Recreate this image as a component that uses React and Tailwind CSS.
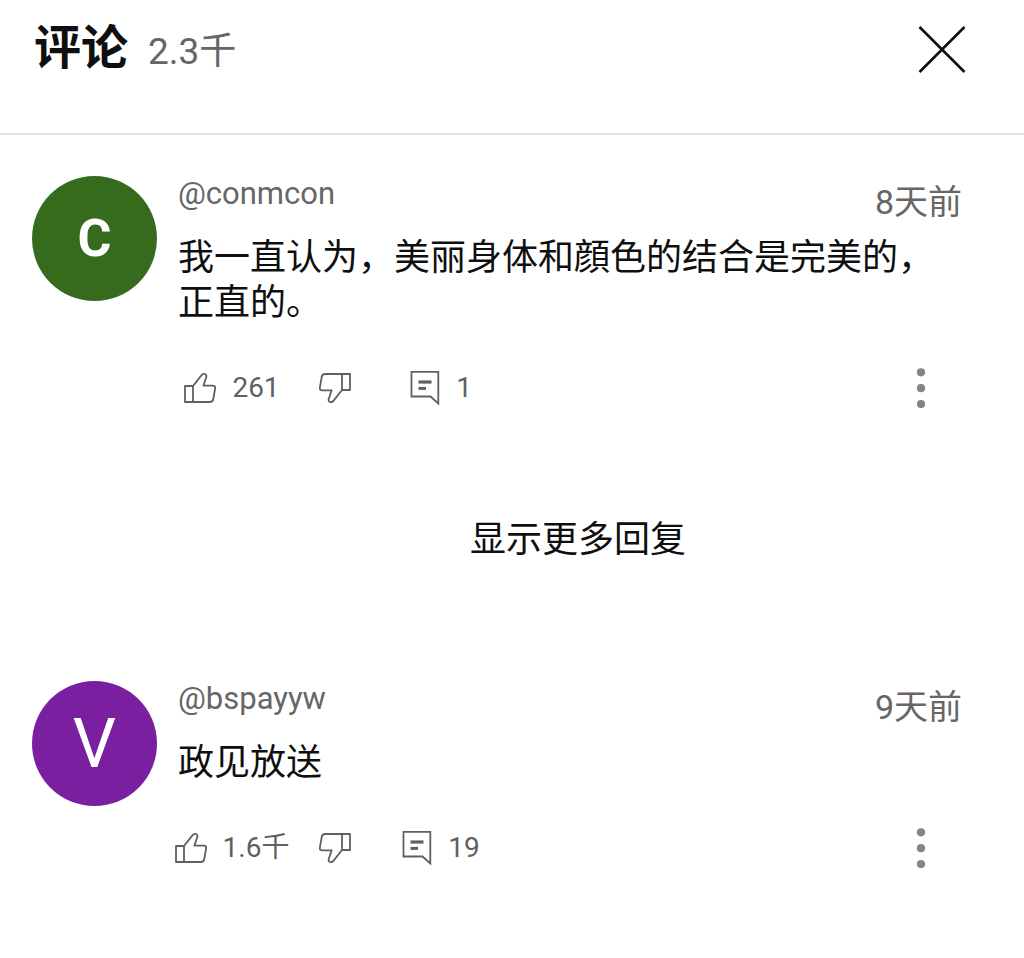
import React from "react";

const comments = [
  {
    id: "c1",
    initial: "C",
    initialClass: "text-[52px] leading-none font-bold",
    color: "bg-[#366b1e]",
    author: "@conmcon",
    age: "8天前",
    text: "我一直认为，美丽身体和顔色的结合是完美的，正直的。",
    likes: "261",
    replies: "1",
    hasMore: true,
  },
  {
    id: "c2",
    initial: "V",
    initialClass: "text-[68px] leading-none font-normal",
    color: "bg-[#7a1fa0]",
    author: "@bspayyw",
    age: "9天前",
    text: "政见放送",
    likes: "1.6千",
    replies: "19",
    hasMore: false,
  },
];

function ThumbIcon({ down = false }) {
  return (
    <svg
      viewBox="0 0 32 32"
      className={down ? "size-8 shrink-0 rotate-180" : "size-8 shrink-0"}
      fill="none"
      stroke="currentColor"
      strokeWidth="1.8"
      strokeLinejoin="round"
      aria-hidden="true"
    >
      <path d="M1 14h8v16H1z" />
      <path d="M9 14 17.2 3.6Q19 1.2 21 2Q23 2.8 22.2 5.3L19.4 13.6H28.6Q31.6 13.6 31.1 16.6L29.3 27Q28.8 30 25.8 30H9" />
    </svg>
  );
}

function ReplyIcon() {
  return (
    <svg viewBox="0 0 30 36" className="h-9 w-[30px] shrink-0" fill="none" stroke="currentColor" aria-hidden="true">
      <path d="M1.5 1.8H28.3V33.5L20.5 26.5H1.5Z" strokeWidth="1.8" />
      <path d="M8.5 12H21.5" strokeWidth="3.2" />
      <path d="M8.5 18.4H16" strokeWidth="3" />
    </svg>
  );
}

function Comment({ comment }) {
  return (
    <article className="flex gap-[21px] pl-8 pr-[62px]">
      <div
        className={`flex size-[125px] shrink-0 items-center justify-center rounded-full text-white ${comment.color}`}
        aria-hidden="true"
      >
        <span className={comment.initialClass}>{comment.initial}</span>
      </div>
      <div className="min-w-0 flex-1">
        <div className="flex h-9 items-start justify-between text-[#666]">
          <a href={`#${comment.id}`} className="text-[31px] leading-9">
            {comment.author}
          </a>
          <time className="text-[34px] leading-[52px]">{comment.age}</time>
        </div>
        <p className="mt-5 font-['Noto_Sans_CJK_SC',sans-serif] text-[36px] leading-[45px] text-[#0f0f0f]">
          {comment.text}
        </p>
        <div className="mt-12 -ml-1 flex h-9 items-center text-[28px] leading-9 text-[#606060]">
          <button type="button" aria-label={`赞 ${comment.likes}`} className="flex w-[116px] items-center justify-center gap-4">
            <ThumbIcon />
            <span>{comment.likes}</span>
          </button>
          <button type="button" aria-label="踩" className="flex w-[90px] items-center justify-center">
            <ThumbIcon down />
          </button>
          <button type="button" aria-label={`回复 ${comment.replies}`} className="flex w-[122px] items-center justify-center gap-4">
            <ReplyIcon />
            <span>{comment.replies}</span>
          </button>
          <button type="button" aria-label="更多操作" className="ml-auto mr-8 text-[#858585]">
            <svg viewBox="0 0 18 40" className="h-10 w-[18px]" fill="currentColor" aria-hidden="true">
              <circle cx="9" cy="4.3" r="4.1" />
              <circle cx="9" cy="20.2" r="4.1" />
              <circle cx="9" cy="36" r="4.1" />
            </svg>
          </button>
        </div>
      </div>
    </article>
  );
}

export default function App() {
  return (
    <main className="min-h-screen bg-white pb-10 font-['Roboto','Noto_Sans_CJK_SC',sans-serif]">
      <header className="flex h-[135px] items-start justify-between border-b-2 border-[#e2e2e2] pl-[34px] pr-[58px] pt-4">
        <div className="flex items-start gap-5">
          <h1 className="text-[47px] leading-[64px] font-bold text-[#0f0f0f]">评论</h1>
          <span className="text-[37px] leading-[72px] text-[#666]">2.3千</span>
        </div>
        <button type="button" aria-label="关闭" className="mt-[9px] text-[#0f0f0f]">
          <svg viewBox="0 0 48 48" className="size-12" fill="none" stroke="currentColor" strokeWidth="2.6" aria-hidden="true">
            <path d="M1.5 2 46.5 47M46.5 2 1.5 47" />
          </svg>
        </button>
      </header>
      <section className="pt-[41px]">
        {comments.map((comment) => (
          <React.Fragment key={comment.id}>
            <Comment comment={comment} />
            {comment.hasMore && (
              <div className="flex justify-center pb-[121px] pl-[178px] pr-[46px] pt-[106px]">
                <button
                  type="button"
                  className="font-['Noto_Sans_CJK_SC',sans-serif] text-[36px] leading-[48px] text-[#0f0f0f]"
                >
                  显示更多回复
                </button>
              </div>
            )}
          </React.Fragment>
        ))}
      </section>
    </main>
  );
}
